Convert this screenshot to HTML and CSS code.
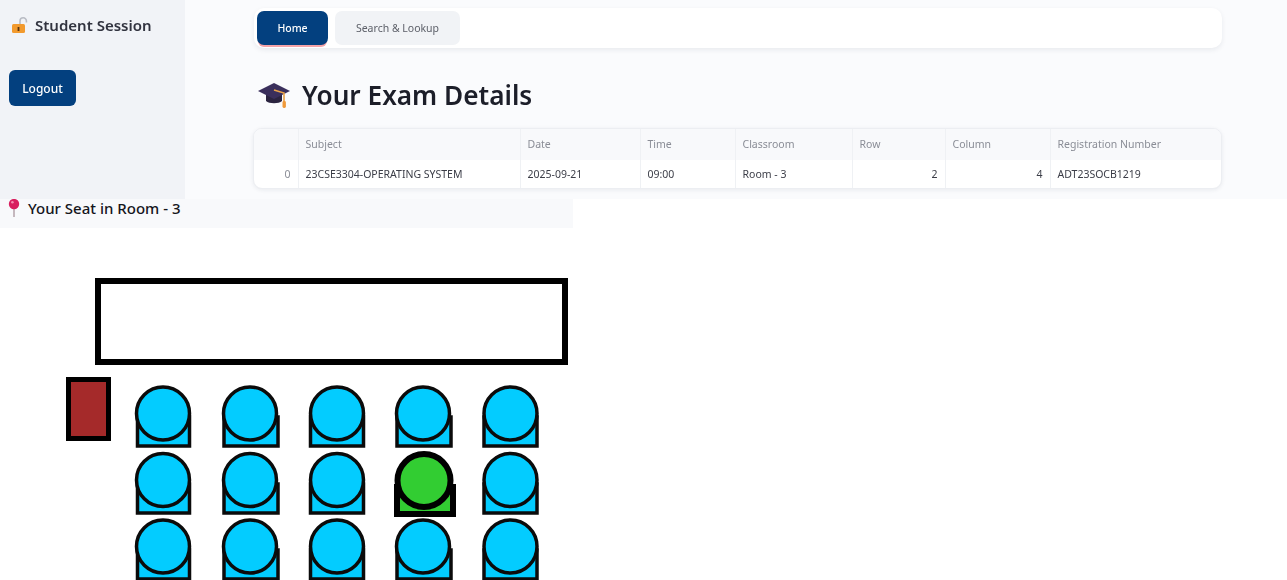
FILE: index.html
```html
<!DOCTYPE html>
<html lang="en">
<head>
  <meta charset="UTF-8">
  <meta name="viewport" content="width=device-width, initial-scale=1.0">
  <title>Your Exam Details</title>
  <link rel="stylesheet" href="styles.css">
</head>
<body>
  <div class="top">
    <aside class="sidebar">
      <div class="session">
        <svg class="session-icon" viewBox="0 0 18 18" aria-hidden="true">
          <path d="M9 9V5a3.2 3.2 0 0 1 6.4 0v1.5" fill="none" stroke="#b9bcc4" stroke-width="1.6"/>
          <rect x="1" y="8" width="13" height="9" rx="1.5" fill="#f29a2e"/>
          <rect x="6.6" y="11" width="1.8" height="4" fill="#5a3410"/>
        </svg>
        <span>Student Session</span>
      </div>
      <button class="logout">Logout</button>
    </aside>
    <main class="content">
      <nav class="tabs">
        <a class="tab active">Home</a>
        <a class="tab">Search &amp; Lookup</a>
      </nav>
      <h1 class="title">
        <svg class="title-icon" viewBox="0 0 32 28" aria-hidden="true">
          <path d="M8 13v7c3 3 13 3 16 0v-7z" fill="#2b2440"/>
          <path d="M0 10 16 2l16 8-16 8z" fill="#3a2f5c"/>
          <path d="M16 9l10 3v9" fill="none" stroke="#e9a24a" stroke-width="1.6"/>
          <rect x="24.5" y="20" width="3.4" height="7" rx="1.4" fill="#ef9a3c"/>
        </svg>
        Your Exam Details
      </h1>
      <div class="table-wrap">
        <table class="exam-table">
          <colgroup>
            <col class="c-index"><col class="c-subject"><col class="c-date"><col class="c-time">
            <col class="c-room"><col class="c-row"><col class="c-column"><col>
          </colgroup>
          <thead>
            <tr>
              <th></th><th>Subject</th><th>Date</th><th>Time</th>
              <th>Classroom</th><th>Row</th><th>Column</th><th>Registration Number</th>
            </tr>
          </thead>
          <tbody>
            <tr>
              <td class="index num">0</td>
              <td>23CSE3304-OPERATING SYSTEM</td>
              <td>2025-09-21</td>
              <td>09:00</td>
              <td>Room - 3</td>
              <td class="num">2</td>
              <td class="num">4</td>
              <td>ADT23SOCB1219</td>
            </tr>
          </tbody>
        </table>
      </div>
    </main>
  </div>

  <div class="seat-heading">
    <svg class="pin" viewBox="0 0 12 20" aria-hidden="true">
      <rect x="5.2" y="9" width="1.6" height="10" fill="#b9a9ae"/>
      <circle cx="6" cy="6" r="5.2" fill="#d81f5f"/>
      <circle cx="4.4" cy="4.2" r="1.3" fill="#f58bb0"/>
    </svg>
    <span>Your Seat in Room - 3</span>
  </div>

  <!-- seat map, y values are relative to the top of the white area -->
  <svg class="seat-map" viewBox="0 228 1287 352" aria-label="Seat map">
    <rect class="board" x="98" y="281" width="467" height="81"/>
    <rect class="desk" x="68.5" y="379.5" width="40" height="59"/>

    <g class="seat"><rect x="137.5" y="417" width="52" height="29"/><circle cx="163" cy="413.5" r="26.5"/></g>
    <g class="seat"><rect x="224" y="417" width="54" height="29"/><circle cx="250" cy="413.5" r="26.5"/></g>
    <g class="seat"><rect x="310.5" y="417" width="53" height="29"/><circle cx="337" cy="413.5" r="26.5"/></g>
    <g class="seat"><rect x="397" y="417" width="54" height="29"/><circle cx="423" cy="413.5" r="26.5"/></g>
    <g class="seat"><rect x="484" y="417" width="53" height="29"/><circle cx="510.5" cy="413.5" r="26.5"/></g>

    <g class="seat"><rect x="137.5" y="484" width="52" height="29"/><circle cx="163" cy="480" r="26.5"/></g>
    <g class="seat"><rect x="224" y="484" width="54" height="29"/><circle cx="250" cy="480" r="26.5"/></g>
    <g class="seat"><rect x="310.5" y="484" width="53" height="29"/><circle cx="337" cy="480" r="26.5"/></g>
    <g class="seat mine"><rect x="397" y="487" width="56" height="27"/><circle cx="424" cy="480.5" r="26.5"/></g>
    <g class="seat"><rect x="484" y="484" width="53" height="29"/><circle cx="510.5" cy="480" r="26.5"/></g>

    <g class="seat"><rect x="137.5" y="550" width="52" height="29"/><circle cx="163" cy="546.5" r="26.5"/></g>
    <g class="seat"><rect x="224" y="550" width="54" height="29"/><circle cx="250" cy="546.5" r="26.5"/></g>
    <g class="seat"><rect x="310.5" y="550" width="53" height="29"/><circle cx="337" cy="546.5" r="26.5"/></g>
    <g class="seat"><rect x="397" y="550" width="54" height="29"/><circle cx="423" cy="546.5" r="26.5"/></g>
    <g class="seat"><rect x="484" y="550" width="53" height="29"/><circle cx="510.5" cy="546.5" r="26.5"/></g>
  </svg>
</body>
</html>
```

FILE: styles.css
```css
* {
  box-sizing: border-box;
}

html, body {
  height: 580px;
  overflow: hidden;
}

body {
  margin: 0;
  background: #ffffff;
  color: #1c1e29;
  font-family: "Noto Sans", "Open Sans", sans-serif;
}

.top {
  display: flex;
  height: 199px;
  background: #fafbfd;
  filter: blur(0.4px);
}

.sidebar {
  width: 185px;
  flex: none;
  padding: 15px 9px 0;
  background: #f1f3f7;
}

.session {
  display: flex;
  align-items: center;
  gap: 6px;
  padding-left: 2px;
  height: 20px;
  font-size: 15px;
  font-weight: 600;
  color: #31333f;
}

.session-icon {
  width: 18px;
  height: 18px;
}

.logout {
  display: block;
  width: 67px;
  height: 36px;
  margin-top: 35px;
  border: none;
  border-radius: 6px;
  background: #03407f;
  color: #ffffff;
  font-family: inherit;
  font-size: 12px;
  font-weight: 500;
}

.content {
  flex: 1;
  padding: 8px 65px 0 69px;
}

.tabs {
  display: flex;
  align-items: flex-start;
  gap: 7px;
  height: 40px;
  padding: 3px 3px 0;
  background: #ffffff;
  border-radius: 10px;
  box-shadow: 0 2px 5px rgba(30, 40, 70, 0.08);
}

.tab {
  display: flex;
  align-items: center;
  justify-content: center;
  height: 34px;
  width: 125px;
  border-radius: 7px;
  background: #f1f3f6;
  color: #5d6069;
  font-size: 10.5px;
}

.tab.active {
  width: 71px;
  background: #03407f;
  color: #ffffff;
  font-weight: 500;
  box-shadow: 0 3px 0 -1px #f4a3a8;
}

.title {
  display: flex;
  align-items: center;
  gap: 12px;
  height: 40px;
  margin: 27px 0 0 4px;
  font-size: 26.2px;
  font-weight: 600;
  line-height: 40px;
  color: #1c1e29;
}

.title-icon {
  width: 32px;
  height: 28px;
}

.table-wrap {
  margin-top: 13px;
  margin-left: -1px;
  border-radius: 9px;
  border: 1px solid #eceef2;
  box-shadow: 0 1px 4px rgba(30, 40, 70, 0.08);
  overflow: hidden;
  background: #ffffff;
}

.exam-table {
  width: 100%;
  table-layout: fixed;
  border-collapse: collapse;
  font-size: 10.5px;
}

.c-index { width: 44px; }
.c-subject { width: 222px; }
.c-date { width: 120px; }
.c-time { width: 95px; }
.c-room { width: 117px; }
.c-row { width: 93px; }
.c-column { width: 105px; }

.exam-table th,
.exam-table td {
  padding: 0 7px;
  text-align: left;
  border-left: 1px solid #eff1f4;
  white-space: nowrap;
  overflow: hidden;
}

.exam-table th:first-child,
.exam-table td:first-child {
  border-left: none;
}

.exam-table th {
  height: 31px;
  padding-bottom: 2px;
  background: #f8f9fb;
  color: #8a8d96;
  font-weight: 400;
}

.exam-table td {
  height: 28px;
  color: #3b3d47;
}

.exam-table td.num {
  text-align: right;
}

.exam-table td.index {
  color: #8a8d96;
}

.seat-heading {
  display: flex;
  align-items: center;
  gap: 8px;
  width: 573px;
  height: 29px;
  padding: 0 0 12px 8px;
  background: #f8f9fb;
  color: #15161c;
  font-size: 15px;
  font-weight: 500;
}

.pin {
  width: 12px;
  height: 20px;
}

.seat-map {
  display: block;
  width: 1287px;
  height: 352px;
}

.board {
  fill: #ffffff;
  stroke: #000000;
  stroke-width: 6;
}

.desk {
  fill: #a52a2a;
  stroke: #000000;
  stroke-width: 5;
}

.seat rect,
.seat circle {
  fill: #03ccff;
  stroke: #0b0b0b;
  stroke-width: 3.5;
}

.seat.mine rect,
.seat.mine circle {
  fill: #32cd32;
  stroke: #000000;
  stroke-width: 6;
}
```
